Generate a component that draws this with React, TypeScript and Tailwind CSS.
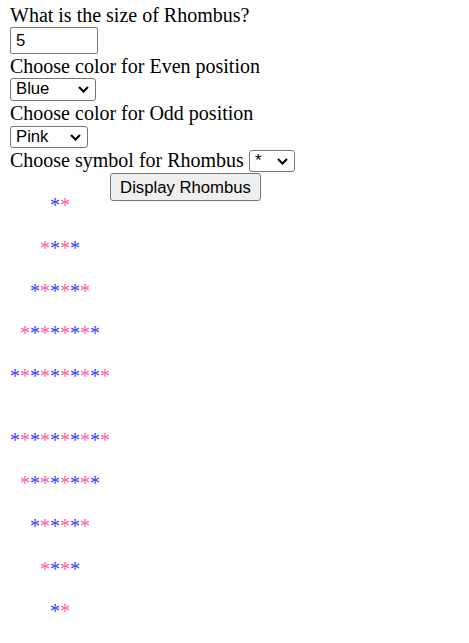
import React from 'react';

const SIZE = 5;

function Chevron() {
  return (
    <svg width="11" height="7" viewBox="0 0 11 7" className="pointer-events-none">
      <polyline points="1,1 5.5,5.5 10,1" fill="none" stroke="#000" strokeWidth="2" />
    </svg>
  );
}

function FakeSelect({ value, width }: { value: string; width: string }) {
  return (
    <div
      className={`${width} h-full flex items-center justify-between border border-[#767676] rounded-[3px] bg-white pl-[5px] pr-[6px] font-['Liberation_Sans',Arial,sans-serif] text-[16.7px] leading-none`}
    >
      <span>{value}</span>
      <Chevron />
    </div>
  );
}

function StarRow({ count, offset, startBlue }: { count: number; offset: number; startBlue: boolean }) {
  const stars = Array.from({ length: count }, (_, i) => (i % 2 === 0) === startBlue);
  return (
    <div className="h-[42.75px] leading-[23px] flex" style={{ paddingLeft: offset }}>
      {stars.map((blue, i) => (
        <span key={i} className={`w-[10px] text-center ${blue ? 'text-[#3a3aff]' : 'text-[#ff5aaa]'}`}>
          *
        </span>
      ))}
    </div>
  );
}

export default function App() {
  const top = Array.from({ length: SIZE }, (_, k) => k + 1);
  const bottom = [...top].reverse();

  return (
    <div className="bg-white min-h-screen px-[10px] pt-[4px] text-black font-['Liberation_Serif','Times_New_Roman',serif] text-[20px] leading-[23px]">
      <div className="h-[23px]">What is the size of Rhombus?</div>
      <div className="h-[28px]">
        <input
          defaultValue="5"
          className="w-[88px] h-[27px] border border-[#767676] rounded-[2px] px-[5px] font-['Liberation_Sans',Arial,sans-serif] text-[16.7px] outline-none"
        />
      </div>
      <div className="h-[23px]">Choose color for Even position</div>
      <div className="h-[24px] pb-[1px]">
        <FakeSelect value="Blue" width="w-[86px]" />
      </div>
      <div className="h-[23px]">Choose color for Odd position</div>
      <div className="h-[24px] pt-[1px] pb-[1px]">
        <FakeSelect value="Pink" width="w-[78px]" />
      </div>
      <div className="h-[24px] flex items-start">
        <span>Choose symbol for Rhombus</span>
        <div className="h-[22px] mt-[1px] ml-[5px]">
          <FakeSelect value="*" width="w-[46px]" />
        </div>
      </div>
      <div className="h-[28px] pl-[100px]">
        <button className="h-[28px] w-[151px] border border-[#767676] rounded-[3px] bg-[#efefef] font-['Liberation_Sans',Arial,sans-serif] text-[16.7px] text-black">
          Display Rhombus
        </button>
      </div>
      <div className="-mt-[7px]">
        {top.map((i) => (
          <StarRow key={`t${i}`} count={2 * i} offset={(SIZE - i) * 10} startBlue={i % 2 === 1} />
        ))}
        <div className="h-[21.5px]" />
        {bottom.map((i) => (
          <StarRow key={`b${i}`} count={2 * i} offset={(SIZE - i) * 10} startBlue={i % 2 === 1} />
        ))}
      </div>
    </div>
  );
}
